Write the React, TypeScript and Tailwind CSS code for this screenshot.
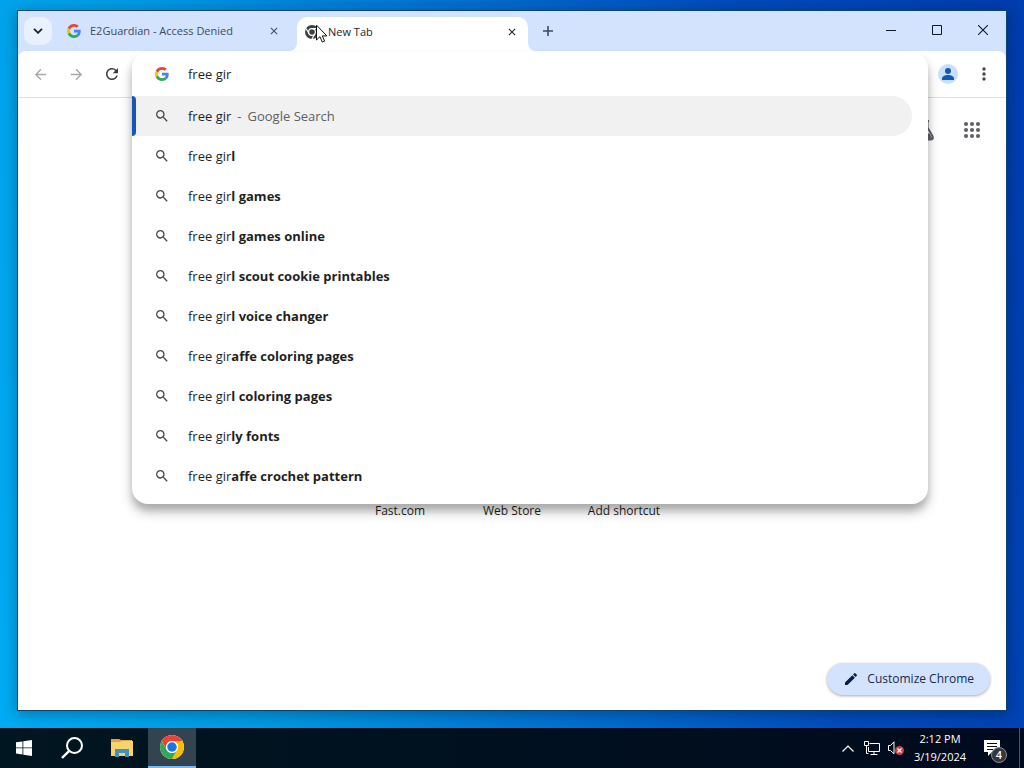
import { useState } from "react";
import {
  MdArrowBack,
  MdArrowForward,
  MdClose,
  MdEdit,
  MdMoreVert,
  MdRefresh,
  MdSearch,
} from "react-icons/md";

const suggestions = [
  { typed: "free gir", rest: "l" },
  { typed: "free gir", rest: "l games" },
  { typed: "free gir", rest: "l games online" },
  { typed: "free gir", rest: "l scout cookie printables" },
  { typed: "free gir", rest: "l voice changer" },
  { typed: "free gir", rest: "affe coloring pages" },
  { typed: "free gir", rest: "l coloring pages" },
  { typed: "free gir", rest: "ly fonts" },
  { typed: "free gir", rest: "affe crochet pattern" },
];

const shortcuts = ["Fast.com", "Web Store", "Add shortcut"];

function GoogleLogo() {
  return (
    <svg viewBox="0 0 48 48" className="w-[14px] h-[14px] shrink-0">
      <path fill="#ea4335" d="M24 9.5c3.54 0 6.71 1.22 9.21 3.6l6.85-6.85C35.9 2.38 30.47 0 24 0 14.62 0 6.51 5.38 2.56 13.22l7.98 6.19C12.43 13.72 17.74 9.5 24 9.5z" />
      <path fill="#4285f4" d="M46.98 24.55c0-1.57-.15-3.09-.38-4.55H24v9.02h12.94c-.58 2.96-2.26 5.48-4.78 7.18l7.73 6c4.51-4.18 7.09-10.36 7.09-17.65z" />
      <path fill="#fbbc05" d="M10.53 28.59c-.48-1.45-.76-2.99-.76-4.59s.27-3.14.76-4.59l-7.98-6.19C.92 16.46 0 20.12 0 24c0 3.88.92 7.54 2.56 10.78l7.97-6.19z" />
      <path fill="#34a853" d="M24 48c6.48 0 11.93-2.13 15.89-5.81l-7.73-6c-2.15 1.45-4.92 2.3-8.16 2.3-6.26 0-11.57-4.22-13.47-9.91l-7.98 6.19C6.51 42.62 14.62 48 24 48z" />
    </svg>
  );
}

function ChromeLogo() {
  return (
    <svg viewBox="0 0 48 48" className="w-6 h-6">
      <circle cx="24" cy="24" r="24" fill="#fff" />
      <path fill="#ea4335" d="M24 12h20.78A24 24 0 0 0 3.22 12l10.39 18A12 12 0 0 1 24 12z" />
      <path fill="#fbbc04" d="M34.39 30 24 48a24 24 0 0 0 20.78-36H24a12 12 0 0 1 10.39 18z" />
      <path fill="#34a853" d="M13.61 30 3.22 12A24 24 0 0 0 24 48l10.39-18a12 12 0 0 1-20.78 0z" />
      <circle cx="24" cy="24" r="12" fill="#fff" />
      <circle cx="24" cy="24" r="9.5" fill="#1a73e8" />
    </svg>
  );
}

function ChromeMono() {
  return (
    <svg viewBox="0 0 48 48" className="w-[14px] h-[14px] shrink-0">
      <circle cx="24" cy="24" r="24" fill="#3c4043" />
      <circle cx="24" cy="24" r="11.5" fill="none" stroke="#fff" strokeWidth="4" />
      <path d="M24 12.5h21M14 30 3.5 12M34 30 24 48" stroke="#fff" strokeWidth="4" fill="none" />
    </svg>
  );
}

function Pointer() {
  return (
    <svg viewBox="0 0 12 19" className="absolute left-[19px] top-[7px] w-3 h-[19px]">
      <path d="M.5 1.200v14.800l3.500-3.300 2.300 5.400 2.300-1-2.300-5.200h4.600z" fill="#fff" stroke="#111" />
    </svg>
  );
}

function TabStrip() {
  return (
    <div className="flex h-10 bg-[#d3e3fd] text-[#1f1f1f]">
      <button aria-label="Search tabs" className="w-7 h-7 mt-[6px] ml-[6px] rounded-[10px] bg-[#e9f1fe] flex items-center justify-center">
        <svg viewBox="0 0 10 6" className="w-[10px] h-[6px]">
          <path d="m1 .8 4 4 4-4" fill="none" stroke="#1f1f1f" strokeWidth="1.800" />
        </svg>
      </button>
      <div className="flex items-center gap-[9px] w-[231px] ml-[6px] px-[9px] text-[11px] text-[#3d4a63]">
        <GoogleLogo />
        <span className="flex-1 truncate">E2Guardian - Access Denied</span>
        <button aria-label="Close tab">
          <MdClose size={12} className="stroke-current" />
        </button>
      </div>
      <div className="relative flex items-center gap-[9px] w-[231px] h-[34px] mt-[6px] ml-[8px] pl-[8px] pr-[10px] pb-[4px] rounded-t-[10px] bg-white text-[11px]">
        <svg viewBox="0 0 8 8" className="absolute -left-2 bottom-0 w-2 h-2">
          <path d="M8 0v8H0a8 8 0 0 0 8-8z" fill="#fff" />
        </svg>
        <svg viewBox="0 0 8 8" className="absolute -right-2 bottom-0 w-2 h-2">
          <path d="M0 0v8h8a8 8 0 0 1-8-8z" fill="#fff" />
        </svg>
        <ChromeMono />
        <span className="flex-1 truncate">New Tab</span>
        <button aria-label="Close tab">
          <MdClose size={12} className="stroke-current" />
        </button>
        <Pointer />
      </div>
      <button aria-label="New tab" className="w-7 h-7 mt-[6px] ml-[6px] flex items-center justify-center">
        <svg viewBox="0 0 10 10" className="w-[10px] h-[10px]">
          <path d="M5 0v10M0 5h10" stroke="#3d4a63" strokeWidth="1.600" />
        </svg>
      </button>
      <div className="flex ml-auto h-[38px] text-[#111827]">
        <button aria-label="Minimize" className="w-[46px] flex items-center justify-center">
          <svg viewBox="0 0 10 10" className="w-[10px] h-[10px]">
            <path d="M0 5.500h10" stroke="currentColor" />
          </svg>
        </button>
        <button aria-label="Maximize" className="w-[46px] flex items-center justify-center">
          <svg viewBox="0 0 10 10" className="w-[10px] h-[10px]">
            <path d="M.5.5h9v9h-9z" fill="none" stroke="currentColor" />
          </svg>
        </button>
        <button aria-label="Close" className="w-[46px] flex items-center justify-center">
          <svg viewBox="0 0 10 10" className="w-[10px] h-[10px]">
            <path d="m0 0 10 10M10 0 0 10" stroke="currentColor" strokeWidth="1.100" />
          </svg>
        </button>
      </div>
    </div>
  );
}

function Omnibox() {
  const [query, setQuery] = useState("free gir");

  return (
    <div className="relative flex-1 mx-0.5">
      <div className="absolute inset-x-0 top-px z-10 pb-2 rounded-2xl bg-white text-[13px] text-[#1f1f1f] shadow-[0_8px_12px_rgba(0,0,0,0.25),0_6px_6px_rgba(0,0,0,0.12)]">
        <div className="flex items-center h-11 pl-[23px] pr-4 gap-[19px]">
          <GoogleLogo />
          <input
            aria-label="Address and search bar"
            value={query}
            onChange={(e) => setQuery(e.target.value)}
            className="flex-1 min-w-0 pt-0.5 outline-none bg-transparent"
          />
        </div>
        <ul>
          <li className="mr-4">
            <button className="relative flex items-center w-full h-10 pl-[22px] gap-[18px] rounded-r-full bg-[#f1f1f1] text-left">
              <span className="absolute left-0 inset-y-0 w-1 rounded-r bg-[#1557b8]" />
              <MdSearch size={16} className="text-[#474747] stroke-current" />
              <span className="flex gap-1.5 pt-0.5">
                free gir
                <span className="flex gap-1.5 text-[#5f5f5f]">
                  <span>-</span> Google Search
                </span>
              </span>
            </button>
          </li>
          {suggestions.map((item) => (
            <li key={item.rest} className="mr-4">
              <button className="flex items-center w-full h-10 pl-[22px] gap-[18px] text-left">
                <MdSearch size={16} className="text-[#474747] stroke-current" />
                <span className="pt-0.5">
                  {item.typed}
                  <b className="font-bold">{item.rest}</b>
                </span>
              </button>
            </li>
          ))}
        </ul>
      </div>
    </div>
  );
}

function Toolbar() {
  return (
    <div className="bg-[#d3e3fd]">
      <div className="flex h-[47px] px-1 bg-white border-b border-[#dcdfe3] rounded-t-lg">
        <button aria-label="Back" className="w-9 flex items-center justify-center text-[#a8a8a8]">
          <MdArrowBack size={17} />
        </button>
        <button aria-label="Forward" className="w-9 flex items-center justify-center text-[#a8a8a8]">
          <MdArrowForward size={17} />
        </button>
        <button aria-label="Reload" className="w-9 flex items-center justify-center text-[#3c3c3c]">
          <MdRefresh size={18} />
        </button>
        <Omnibox />
        <button aria-label="Profile" className="w-9 flex items-center justify-center">
          <svg viewBox="0 0 20 20" className="w-5 h-5">
            <circle cx="10" cy="10" r="10" fill="#c7e0fb" />
            <circle cx="10" cy="7" r="3" fill="#1557b8" />
            <path d="M4 16v-1.500c0-2.300 3-3.500 6-3.500s6 1.200 6 3.500V16z" fill="#1557b8" />
          </svg>
        </button>
        <button aria-label="Menu" className="w-9 flex items-center justify-center text-[#474747]">
          <MdMoreVert size={20} />
        </button>
      </div>
    </div>
  );
}

function NewTabPage() {
  return (
    <div className="flex-1 flex flex-col bg-white">
      <div className="flex justify-end items-center gap-6 h-16 pr-[22px] text-[#5f6368]">
        <a href="#labs" aria-label="Search Labs">
          <svg viewBox="0 0 24 24" className="w-6 h-6" fill="none" stroke="currentColor" strokeWidth="2">
            <path d="M7 3h10M9.500 3v6.500L3.600 18q-1.600 3 1.400 3.500h14q3-.5 1.400-3.500L15.500 9.500V3" />
            <path d="M7 16.500h10l2 3.500H5z" fill="currentColor" />
          </svg>
        </a>
        <a href="#apps" aria-label="Google apps">
          <svg viewBox="0 0 24 24" className="w-6 h-6" fill="currentColor">
            {[6, 12, 18].map((y) =>
              [6, 12, 18].map((x) => <circle key={`${x}-${y}`} cx={x} cy={y} r="2.100" />)
            )}
          </svg>
        </a>
      </div>
      <div className="flex justify-center pt-[339px] text-[12px] leading-5 text-[#1f1f1f]">
        {shortcuts.map((name) => (
          <a key={name} href="#shortcut" className="w-28 text-center">
            {name}
          </a>
        ))}
      </div>
      <button className="flex items-center gap-2 h-8 mt-auto mb-[15px] mr-4 px-4 self-end rounded-full bg-[#d3e3fd] text-[12px] text-[#16294f] shadow-[0_1px_3px_rgba(0,0,0,0.35)]">
        <MdEdit size={16} className="text-[#041e49]" />
        Customize Chrome
      </button>
    </div>
  );
}

function Taskbar() {
  return (
    <div className="flex h-10 bg-linear-to-r from-[#001620] to-[#000a1e] text-white">
      <button aria-label="Start" className="w-12 flex items-center justify-center">
        <svg viewBox="0 0 16 16" className="w-4 h-4" fill="#fff">
          <path d="M0 2.300 6.500 1.400v6.100H0zM7.300 1.300 16 0v7.500H7.300zM0 8.300h6.500v6.200L0 13.600zM7.300 8.300H16V16l-8.700-1.300z" />
        </svg>
      </button>
      <button aria-label="Search" className="w-12 flex items-center justify-center">
        <svg viewBox="0 0 22 22" className="w-[22px] h-[22px]" fill="none" stroke="#fff" strokeWidth="2">
          <circle cx="13.500" cy="8.500" r="7.500" />
          <path d="M8.200 13.800 1 21" strokeWidth="2.400" />
        </svg>
      </button>
      <button aria-label="File Explorer" className="w-[52px] flex items-center justify-center">
        <svg viewBox="0 0 22 18" className="w-[22px] h-[18px]">
          <path d="M0 0h8l2 1h11v4H0z" fill="#e0a243" />
          <path d="M0 3h9l2-1h11v15H0z" fill="#f7d36a" />
          <path d="M4 18v-8h14v8h-4v-4H8v4z" fill="#4291bd" />
        </svg>
      </button>
      <button aria-label="Google Chrome" className="w-12 flex items-center justify-center bg-[#33434f] border-b-2 border-[#76b9ed]">
        <ChromeLogo />
      </button>
      <div className="flex items-center ml-auto">
        <button aria-label="Show hidden icons" className="w-6 flex justify-center">
          <svg viewBox="0 0 12 7" className="w-3 h-[7px]">
            <path d="m.5 6.500 5.500-5.500 5.500 5.500" fill="none" stroke="#fff" strokeWidth="1.200" />
          </svg>
        </button>
        <button aria-label="Network" className="w-6 flex justify-center">
          <svg viewBox="0 0 16 14" className="w-4 h-[14px]" fill="none" stroke="#fff">
            <path d="M5.500 2.500h10v8h-11V6M10 10.500v3M6.500 13.500h7M.5.500h4v4h-4zM2.500 4.500v8h2" />
          </svg>
        </button>
        <button aria-label="Volume muted" className="w-6 flex justify-center">
          <svg viewBox="0 0 16 14" className="w-4 h-[14px]">
            <path d="M.5 4.500h2l3.500-3.700v12L2.500 9.500h-2z" fill="none" stroke="#fff" />
            <circle cx="11.500" cy="9.500" r="4.500" fill="#c9404a" />
            <path d="m9.500 7.500 4 4M13.500 7.500l-4 4" stroke="#fff" strokeWidth="1.200" />
          </svg>
        </button>
        <div className="w-16 text-center text-[11px] leading-[18px] whitespace-nowrap">
          <p>2:12 PM</p>
          <p>3/19/2024</p>
        </div>
        <button aria-label="Notifications" className="relative w-10 h-10 flex items-center justify-center">
          <svg viewBox="0 0 16 16" className="w-4 h-4">
            <path d="M0 0h16v12H8l-4 4v-4H0z" fill="#fff" />
            <path d="M3 3.500h10M3 6.500h10M3 9.500h6" stroke="#000a1e" />
          </svg>
          <span className="absolute left-[19px] top-[19px] w-4 h-4 rounded-full bg-[#33373d] border border-[#8a8d91] text-[11px] leading-[14px] font-semibold">
            4
          </span>
        </button>
        <span className="w-2 h-10 mr-1 border-r border-[#4a5560]" />
      </div>
    </div>
  );
}

export default function App() {
  return (
    <div className="min-h-screen flex flex-col font-['Open_Sans','Noto_Sans',sans-serif] bg-linear-[80deg,#00acf4_0%,#009ce4_22%,#0074d2_48%,#004cbc_74%,#003cae_100%]">
      <div className="flex-1 flex flex-col px-[17px] pt-[10px] pb-[17px]">
        <div className="flex-1 flex flex-col border border-[#0b4272] shadow-[0_3px_14px_rgba(0,0,0,0.3)]">
          <TabStrip />
          <Toolbar />
          <NewTabPage />
        </div>
      </div>
      <Taskbar />
    </div>
  );
}
